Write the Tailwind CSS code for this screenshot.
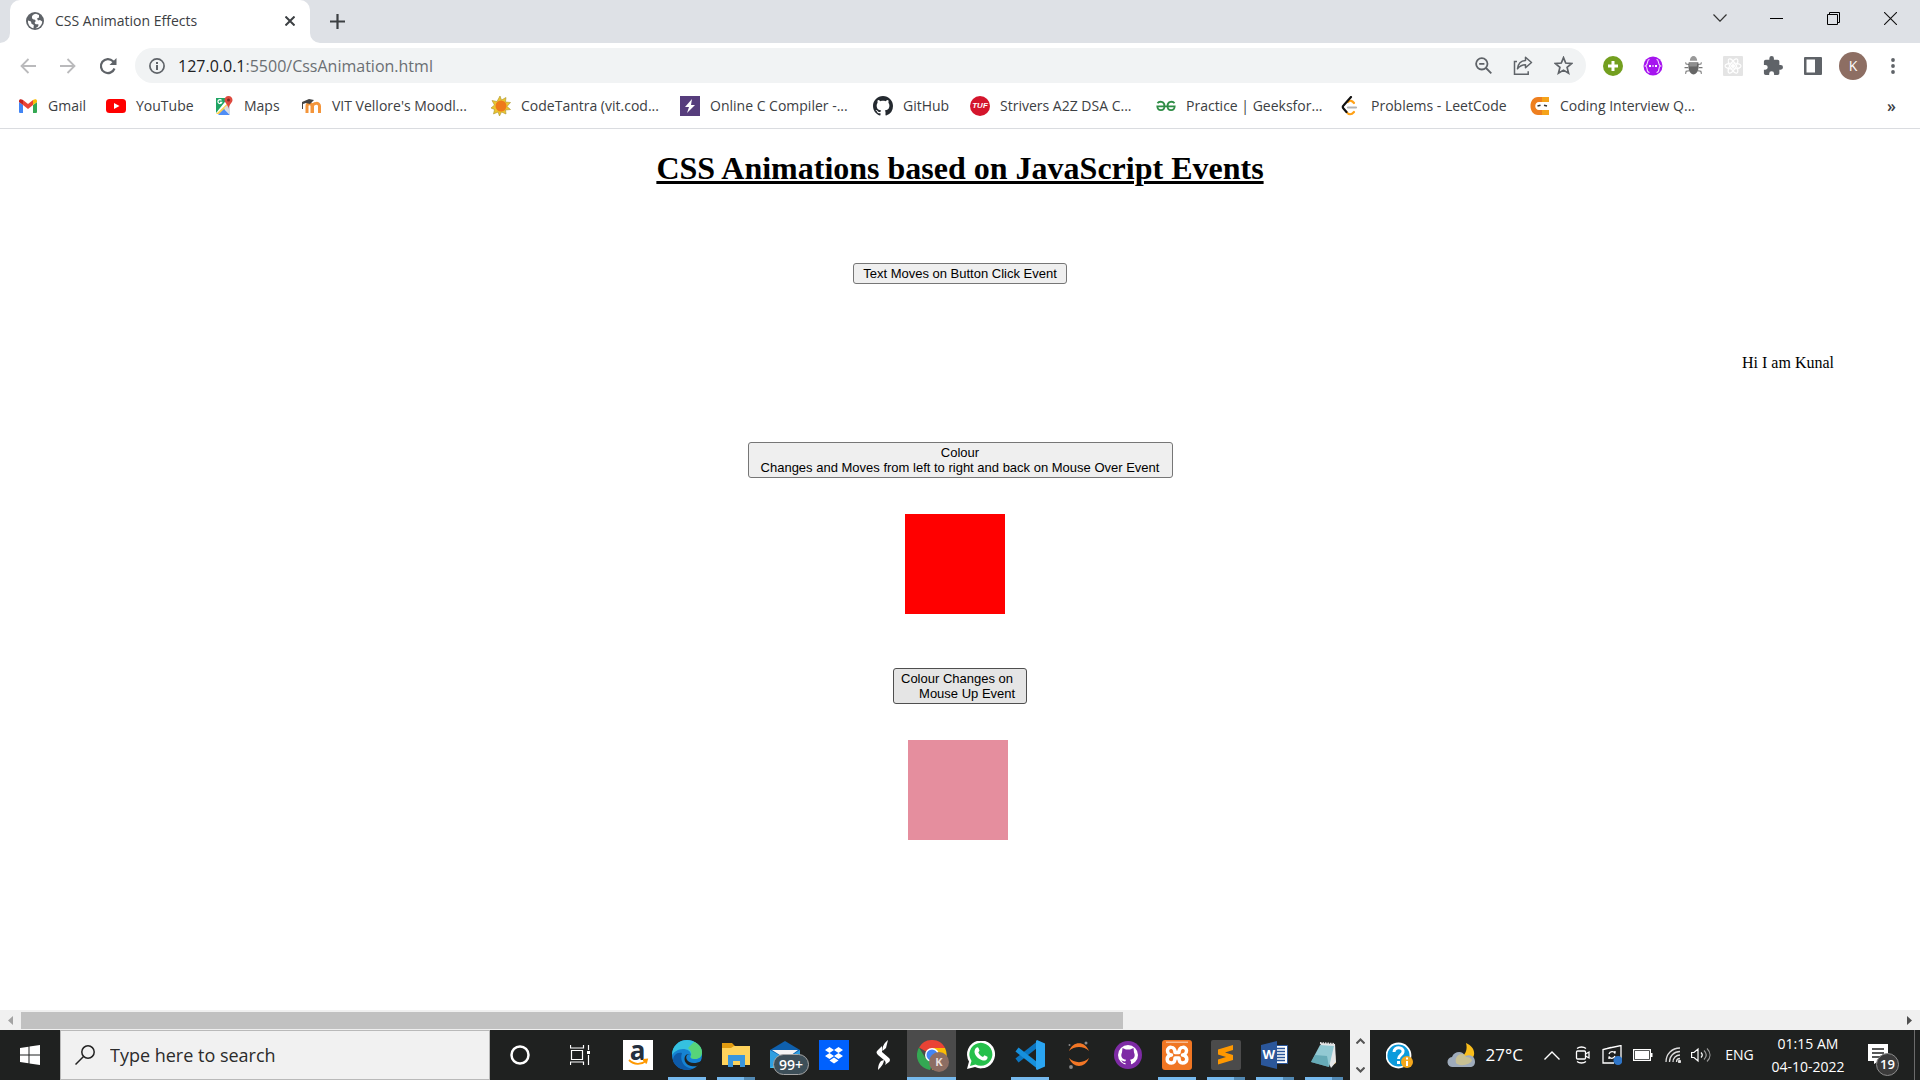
<!DOCTYPE html>
<html lang="en">
<head>
<meta charset="utf-8">
<title>CSS Animation Effects</title>
<script src="https://cdn.jsdelivr.net/npm/@tailwindcss/browser@4"></script>
</head>
<body class="flex min-h-screen flex-col overflow-x-hidden bg-white font-['Open_Sans',sans-serif] text-[#3c4043]">

<!-- Tab strip -->
<header class="flex h-[43px] shrink-0 items-end bg-[#dee1e6]">
  <svg class="size-[10px] shrink-0" viewBox="0 0 10 10"><path fill="#fff" d="M10 0v10H0A10 10 0 0 0 10 0z"/></svg>
  <div class="flex h-full w-[300px] items-center rounded-t-[10px] bg-white pr-[10px] pb-[2px] pl-4">
    <svg class="size-[18px] shrink-0" viewBox="0 0 18 18"><circle cx="9" cy="9" r="9" fill="#5f6368"/><path fill="#fff" d="M10 1.800C7 2 5.500 4 6 6c.5 2 3 1 3.500 2.500S8 10 9 11.500s3.500 0 3.500 1.500-1.500 2.500-3 3.200C13 16.500 16.200 13 16.200 9.500L14 8l-2 .5-1-2 2-1V3zM2 8.500C1.500 13 5 16 7.500 16.200L7.800 13 5.500 11.800 5 9.500z"/></svg>
    <span class="ml-[11px] flex-1 text-sm whitespace-nowrap">CSS Animation Effects</span>
    <button class="flex size-5 items-center justify-center" aria-label="Close tab"><svg class="size-[10px]" viewBox="0 0 10 10" stroke="#3c4043" stroke-width="2"><path d="M.5.5l9 9M9.500.5l-9 9"/></svg></button>
  </div>
  <svg class="size-[10px] shrink-0" viewBox="0 0 10 10"><path fill="#fff" d="M0 0v10h10A10 10 0 0 1 0 0z"/></svg>
  <button class="flex h-full w-[34px] items-center justify-center" aria-label="New tab"><svg class="size-[15px]" viewBox="0 0 15 15" stroke="#3c4043" stroke-width="2.200"><path d="M7.500 0v15M0 7.500h15"/></svg></button>
  <div class="ml-auto flex h-9 self-start pr-px">
    <button class="flex w-[57px] items-center justify-center" aria-label="Search tabs"><svg class="h-2 w-[14px]" viewBox="0 0 14 8" fill="none" stroke="#333" stroke-width="1.200"><path d="M.5.5L7 7.200 13.500.5"/></svg></button>
    <button class="flex w-[57px] items-center justify-center" aria-label="Minimize"><svg class="h-px w-[13px]" viewBox="0 0 13 1"><path fill="#000" d="M0 0h13v1H0z"/></svg></button>
    <button class="flex w-[57px] items-center justify-center" aria-label="Restore"><svg class="size-[13px]" viewBox="0 0 13 13" fill="none" stroke="#000"><path d="M.5 2.500h10v10H.5zM2.500 2.500v-2h10v10h-2"/></svg></button>
    <button class="flex w-[57px] items-center justify-center" aria-label="Close"><svg class="size-[13px]" viewBox="0 0 13 13" stroke="#111" stroke-width="1.100"><path d="M0 0l13 13M13 0L0 13"/></svg></button>
  </div>
</header>

<!-- Toolbar -->
<nav class="flex h-[45px] shrink-0 items-center pr-[7px] pl-2" aria-label="Browser toolbar">
  <button class="flex w-10 justify-center" aria-label="Back"><svg class="size-4" viewBox="0 0 16 16" fill="none" stroke="#bababc" stroke-width="1.800"><path d="M16 8H1.500M8.500 1L1.500 8l7 7"/></svg></button>
  <button class="flex w-10 justify-center" aria-label="Forward"><svg class="size-4" viewBox="0 0 16 16" fill="none" stroke="#bababc" stroke-width="1.800"><path d="M0 8h14.500M7.500 1l7 7-7 7"/></svg></button>
  <button class="flex w-10 justify-center" aria-label="Reload"><svg class="size-[18px]" viewBox="0 0 18 18" fill="none" stroke="#5f6368" stroke-width="2.200"><path d="M15.500 11.500A7 7 0 1 1 14 4.200l2 2"/><path fill="#5f6368" stroke="none" d="M17.500 1v7h-7z"/></svg></button>
  <div class="ml-[7px] flex h-[35px] flex-1 items-center rounded-full bg-[#f1f3f4] pr-[3px] pl-[14px]">
    <svg class="size-4 shrink-0" viewBox="0 0 16 16"><circle cx="8" cy="8" r="7.100" fill="none" stroke="#5f6368" stroke-width="1.700"/><path fill="#5f6368" d="M7 7h2v5H7zM7 4h2v2H7z"/></svg>
    <span class="ml-[13px] flex-1 text-base whitespace-nowrap text-[#6b6f73]"><span class="text-[#202124]">127.0.0.1</span>:5500/CssAnimation.html</span>
    <button class="flex w-10 justify-center" aria-label="Zoom"><svg class="size-[17px]" viewBox="0 0 17 17" fill="none" stroke="#5f6368" stroke-width="1.800"><circle cx="6.800" cy="6.800" r="5.700"/><path d="M11 11l5.300 5.300M4.200 6.800h5.200"/></svg></button>
    <button class="flex w-10 justify-center" aria-label="Share"><svg class="h-[19px] w-5" viewBox="0 0 20 19" fill="none" stroke="#5f6368" stroke-width="1.500"><path d="M4 5.500H1.500v12.700h13.700v-3"/><path stroke-linejoin="round" d="M12.500 1.200l6 5.300-6 5.300v-3c-4 0-6 1.500-8 4 .5-4.500 3-8 8-8.300z"/></svg></button>
    <button class="flex w-10 justify-center" aria-label="Bookmark"><svg class="size-[19px]" viewBox="0 0 18 18" fill="none" stroke="#5f6368" stroke-width="1.600"><path d="M9 1.500l2.100 5.200 5.600.5-4.300 3.600 1.400 5.500L9 13.400l-4.800 2.900 1.400-5.500-4.300-3.600 5.600-.5z"/></svg></button>
  </div>
  <div class="ml-[7px] flex items-center">
    <button class="flex w-10 justify-center" aria-label="Extension: add"><svg class="size-5" viewBox="0 0 20 20"><circle cx="10" cy="10" r="10" fill="#739f1f"/><path stroke="#fff" stroke-width="3" d="M10 5v10M5 10h10"/></svg></button>
    <button class="flex w-10 justify-center" aria-label="Extension: code"><svg class="size-5" viewBox="0 0 20 20" fill="none" stroke="#f5d5ff" stroke-width="1.100"><circle cx="10" cy="10" r="9.500" fill="#a514ef" stroke="none"/><path d="M6.500 3.500C3.500 3.500 5.500 9 2.500 10c3 1 0 6.500 4 6.500M13.500 3.500c3 0 1 5.500 4 6.500-3 1 0 6.500-4 6.500"/><path fill="#fff" stroke="none" d="M6 9h2v2H6zM9 9.500h2v1H9zM12 9h2v2h-2z"/></svg></button>
    <button class="flex w-10 justify-center" aria-label="Extension: bug"><svg class="size-[19px]" viewBox="0 0 18 18"><g fill="none" stroke="#777"><path d="M5 8L2 7.500 1.500 6M4 11H.5M5 14l-3 .5L1.500 17M13 8l3-.5.500-1.500M14 11h3.500M13 14l3 .5.500 2.500"/></g><path fill="#999" d="M5.500 4.500a3.500 4.500 0 0 1 7 0z"/><path fill="#666" d="M4.500 6h9c1 5 0 11-4.500 11.500C4.500 17 3.500 11 4.500 6z"/><path fill="#aaa" d="M5 6h8l-1 4H5z" opacity=".6"/></svg></button>
    <button class="flex w-10 justify-center" aria-label="Extension: React"><svg class="size-5" viewBox="0 0 20 20" fill="none" stroke="#fff" stroke-width="1.100"><rect width="20" height="20" rx="1" fill="#e4e4e4" stroke="none"/><ellipse cx="10" cy="10" rx="8" ry="3"/><ellipse cx="10" cy="10" rx="8" ry="3" transform="rotate(60 10 10)"/><ellipse cx="10" cy="10" rx="8" ry="3" transform="rotate(120 10 10)"/><circle cx="10" cy="10" r="1.500" fill="#fff"/></svg></button>
    <button class="flex w-10 justify-center" aria-label="Extensions"><svg class="size-5" viewBox="1 1 22 22"><path fill="#5f6368" d="M20.500 11H19V7a2 2 0 0 0-2-2h-4V3.500a2.500 2.500 0 0 0-5 0V5H4a2 2 0 0 0-2 2v3.800h1.500a2.700 2.700 0 0 1 0 5.400H2V20a2 2 0 0 0 2 2h3.800v-1.500a2.700 2.700 0 0 1 5.400 0V22H17a2 2 0 0 0 2-2v-4h1.500a2.500 2.500 0 0 0 0-5z"/></svg></button>
    <button class="flex w-10 justify-center" aria-label="Side panel"><svg class="size-[18px]" viewBox="0 0 18 18"><path fill="#5f6368" fill-rule="evenodd" d="M1 0h16a1 1 0 0 1 1 1v16a1 1 0 0 1-1 1H1a1 1 0 0 1-1-1V1a1 1 0 0 1 1-1zm1.500 2.500v13H11v-13z"/></svg></button>
    <button class="flex w-10 justify-center" aria-label="Profile"><span class="flex size-7 items-center justify-center rounded-full bg-[#8d6e63] text-sm text-white">K</span></button>
    <button class="flex w-10 justify-center" aria-label="Menu"><svg class="h-4 w-1" viewBox="0 0 4 16" fill="#5f6368"><circle cx="2" cy="2" r="1.900"/><circle cx="2" cy="8" r="1.900"/><circle cx="2" cy="14" r="1.900"/></svg></button>
  </div>
</nav>

<!-- Bookmarks bar -->
<nav class="flex h-[41px] shrink-0 items-center border-b border-[#dadce0] pr-6 pb-1 pl-[18px] text-sm whitespace-nowrap" aria-label="Bookmarks">
  <a href="#" class="flex w-[88px] items-center gap-[10px]"><svg class="size-5 shrink-0" viewBox="0 0 20 20"><path fill="#4285f4" d="M1 6l4 3v8H2a1 1 0 0 1-1-1z"/><path fill="#34a853" d="M15 9l4-3v10a1 1 0 0 1-1 1h-3z"/><path fill="#ea4335" d="M5 4l5 4 5-4v5l-5 4-5-4z"/><path fill="#c5221f" d="M1 5c0-2 2-2.500 4-1v5L1 6z"/><path fill="#fbbc04" d="M19 5c0-2-2-2.500-4-1v5l4-3z"/></svg>Gmail</a>
  <a href="#" class="flex w-[108px] items-center gap-[10px]"><svg class="size-5 shrink-0" viewBox="0 0 20 20"><rect y="3" width="20" height="14" rx="3.500" fill="#f00"/><path fill="#fff" d="M8 7l5.500 3L8 13z"/></svg>YouTube</a>
  <a href="#" class="flex w-[88px] items-center gap-[10px]"><svg class="size-5 shrink-0" viewBox="0 0 20 20"><path fill="#1fa463" d="M2 2h12L2 17z"/><path fill="#ffd04b" d="M2 18L16 5v4L6 18z"/><path fill="#4f8df5" d="M4 19l6-6 6 6z"/><path fill="#d9dbe0" d="M10 12l6-5v12z"/><path fill="#de4a3f" d="M14.500 0C12 0 10.500 2 10.500 4c0 3 3.500 4 4 9 .5-5 4-6 4-9 0-2-1.500-4-4-4z"/><circle cx="14.500" cy="4" r="1.500" fill="#7d2820"/><path fill="none" stroke="#fff" stroke-width="1.200" d="M7.500 4.300a2 2 0 1 0 .3 2H6"/></svg>Maps</a>
  <a href="#" class="flex w-[189px] items-center gap-[10px]"><svg class="size-5 shrink-0" viewBox="0 0 20 20"><path fill="none" stroke="#f4953a" stroke-width="3" d="M5 17V10c0-3 5-3 5 0v7M10.500 17v-7c.5-3 7-4 7 0v7"/><path fill="#444" d="M0 6l7-3 5 1-4 4-4-1-3 1v5H0z"/></svg>VIT Vellore's Moodl...</a>
  <a href="#" class="flex w-[189px] items-center gap-[10px]"><svg class="size-5 shrink-0" viewBox="0 0 20 20"><path fill="#ecc52f" stroke="#a9932f" stroke-width=".6" d="M9 0l1.500 4L15 1.500 14.500 6l5 .5-3.500 4 3.500 3-5 .5.500 4-4.500-2L8.500 20l-1.500-4-4.500 2 1-4.500L0 12l3.500-3L1 4.500l5 1z"/><circle cx="10" cy="10" r="5.500" fill="#ee7a1b"/></svg>CodeTantra (vit.cod...</a>
  <a href="#" class="flex w-[193px] items-center gap-[10px]"><svg class="size-5 shrink-0" viewBox="0 0 20 20"><path fill="#563d7c" d="M0 0h20v20H0z"/><path fill="#fff" d="M12 3l-7 8h4l-2 6 8-8h-4z"/></svg>Online C Compiler -...</a>
  <a href="#" class="flex w-[97px] items-center gap-[10px]"><svg class="size-5 shrink-0" viewBox="0 0 16 16"><path fill="#24292f" d="M8 0C3.580 0 0 3.580 0 8c0 3.540 2.290 6.530 5.470 7.590.4.070.55-.17.55-.38 0-.19-.01-.82-.01-1.490-2.010.37-2.530-.49-2.690-.94-.09-.23-.48-.94-.82-1.130-.28-.15-.68-.52-.01-.53.63-.01 1.080.58 1.230.82.72 1.210 1.870.87 2.330.66.07-.52.28-.87.51-1.070-1.780-.2-3.640-.89-3.640-3.950 0-.87.31-1.590.82-2.150-.08-.2-.36-1.020.08-2.120 0 0 .67-.21 2.200.82.64-.18 1.320-.27 2-.27s1.360.09 2 .27c1.530-1.040 2.200-.82 2.200-.82.44 1.100.16 1.920.08 2.120.51.56.82 1.270.82 2.150 0 3.070-1.870 3.750-3.650 3.950.29.25.54.73.54 1.480 0 1.070-.01 1.930-.01 2.200 0 .21.15.46.55.38A8.010 8.010 0 0 0 16 8c0-4.420-3.580-8-8-8z"/></svg>GitHub</a>
  <a href="#" class="flex w-[186px] items-center gap-[10px]"><span class="flex size-5 shrink-0 items-center justify-center rounded-full bg-[#d4152c] font-['Liberation_Sans',sans-serif] text-[8px] font-bold text-white italic">TUF</span>Strivers A2Z DSA C...</a>
  <a href="#" class="flex w-[185px] items-center gap-[10px]"><svg class="size-5 shrink-0" viewBox="0 0 20 20" fill="none" stroke="#2f8d46" stroke-width="1.800"><path d="M1.500 7.200C3 5 8.500 5 8.500 10c0 5.500-7 5.500-7.200.3h17.400c-.2 5.200-7.200 5.200-7.200-.3 0-5 5.500-5 7-2.800"/></svg>Practice | Geeksfor...</a>
  <a href="#" class="flex w-[189px] items-center gap-[10px]"><svg class="size-5 shrink-0" viewBox="0 0 20 20" fill="none" stroke-width="2.200" stroke-linecap="round"><path stroke="#ffa116" d="M5.500 16c2 3 5 3 7.500 0M7 6c2-2 4-1.500 6 1"/><path stroke="#111" d="M10 1L2.500 9.500c-1 1-1 2 0 3L5.500 16"/><path stroke="#b3b3b3" d="M7 11.500h8"/></svg>Problems - LeetCode</a>
  <a href="#" class="flex items-center gap-[10px]"><svg class="size-5 shrink-0" viewBox="0 0 20 20"><path fill="#ee7f1f" d="M8 1h11v5H9c-5 0-5 8 0 8h10v5H8C-2 19-2 1 8 1z"/><path fill="#f5a31a" d="M12 1h7v5h-7zM12 14h7v5h-7z"/><path stroke="#333" stroke-width="1.500" d="M7.500 10l3-.8M14 9.200l3 .8"/></svg>Coding Interview Q...</a>
  <button class="ml-auto text-base font-semibold" aria-label="More bookmarks">»</button>
</nav>

<!-- Page -->
<main class="flex flex-1 flex-col items-center px-2 font-['Liberation_Sans',sans-serif] text-[13px] leading-[15px] text-black">
  <h1 class="mt-[21px] font-['Liberation_Serif',serif] text-[32px] leading-[37px] font-bold underline">CSS Animations based on JavaScript Events</h1>
  <button class="mt-[76px] w-[214px] rounded-[3px] border border-[#767676] bg-[#efefef] py-[2px]">Text Moves on Button Click Event</button>
  <p class="mt-[70px] mr-[78px] self-end font-['Liberation_Serif',serif] text-base leading-[18px]">Hi I am Kunal</p>
  <button class="mt-[70px] w-[425px] rounded-[3px] border border-[#767676] bg-[#efefef] py-[2px]">Colour<br>Changes and Moves from left to right and back on Mouse Over Event</button>
  <div class="mt-9 mr-[10px] size-[100px] bg-[#ff0000]"></div>
  <button class="mt-[54px] w-[134px] rounded-[3px] border border-[#4f4f4f] bg-[#e5e5e5] py-[2px] pl-[7px] text-left whitespace-pre">Colour Changes on
     Mouse Up Event</button>
  <div class="mt-9 mr-1 size-[100px] bg-[#e58e9e]"></div>
</main>

<!-- Horizontal scrollbar -->
<div class="flex h-5 shrink-0 items-center bg-[#f0f0f0] px-2">
  <svg class="h-[9px] w-[5px]" viewBox="0 0 5 9"><path fill="#a3a3a3" d="M5 0v9L0 4.500z"/></svg>
  <div class="mx-2 flex-1"><div class="h-[17px] w-[58.7%] bg-[#c1c1c1]"></div></div>
  <svg class="h-[9px] w-[5px]" viewBox="0 0 5 9"><path fill="#505050" d="M0 0v9l5-4.500z"/></svg>
</div>

<!-- Taskbar -->
<footer class="flex h-[50px] shrink-0 items-stretch bg-[#1f2120] whitespace-nowrap text-white">
  <button class="flex w-[60px] items-center justify-center" aria-label="Start"><svg class="size-5" viewBox="0 0 20 20" fill="#fff"><path d="M0 3l8.500-1.200v7.700H0zM9.500 1.600L20 0v9.500H9.500zM0 10.500h8.500v7.700L0 17zM9.500 10.500H20V20L9.500 18.400z"/></svg></button>
  <label class="flex w-[430px] items-center border border-[#b9b9b9] bg-[#f1f1f1] pl-[14px]">
    <svg class="size-5 shrink-0" viewBox="0 0 20 20" fill="none" stroke="#222" stroke-width="1.500"><circle cx="13" cy="7" r="6.200"/><path d="M8.500 11.500L.5 19.500"/></svg>
    <input type="text" aria-label="Search" placeholder="Type here to search" class="ml-[15px] min-w-0 flex-1 text-lg outline-none placeholder:text-[#2b2b2b]">
  </label>
  <button class="flex w-[60px] items-center justify-center" aria-label="Cortana"><svg class="size-5" viewBox="0 0 20 20"><circle cx="10" cy="10" r="8.500" fill="none" stroke="#fff" stroke-width="2.500"/></svg></button>
  <button class="flex w-[60px] items-center justify-center" aria-label="Task view"><svg class="size-5" viewBox="0 0 20 20" fill="none" stroke="#fff" stroke-width="1.200"><path d="M1.500 5.500h11v9h-11zM.5 0v3h13V0M.5 20v-3h13v3M18.500 0v5M18.500 10v10"/><path fill="#fff" stroke="none" d="M17 6h3v3h-3z"/></svg></button>

  <div class="flex pl-[3px]">
    <button class="flex w-[49px] items-center justify-center" aria-label="Amazon"><span class="relative flex size-[30px] justify-center bg-white"><span class="text-[26px] leading-[20px] font-bold text-[#232f3e]">a</span><svg class="absolute inset-0" viewBox="0 0 30 30" fill="none" stroke="#ff9900" stroke-width="1.800"><path d="M6 20c5 5 12 5 17 1M20 20l4-.5-1 4"/></svg></span></button>
    <button class="relative flex w-[49px] items-center justify-center" aria-label="Edge"><svg class="size-[30px]" viewBox="0 0 30 30"><circle cx="15" cy="15" r="15" fill="#1583d3"/><path fill="#35c1e0" d="M0 15C0 6 7 0 15 0s15 6 15 12c0 5-3 7-7 7-3 0-6-1-4-4 0-4-4-6-8-6-5 0-9 3-11 6z"/><path fill="#63d957" d="M22 2c5 2 8 6 8 10 0 5-3 7-7 7-3 0-5-1-4-3 1-3 0-6-3-8z" opacity=".75"/><path fill="#0d5aa8" d="M10 13c-3 8 3 16 11 15.500C14 32 4 29 1 21c0-6 4-9 9-8z"/><path fill="#1f2120" d="M19 14c-4-2-6 1-5 5 2 5 9 6 15 2l1 0v9h-8c-5 0-9-3-9.500-8C12 15 15 12 19 14z" opacity="0"/><path fill="#1f2120" d="M18.500 15c-3-1.500-5 1-4 4 2 4.500 9 5.500 14.500 2l1 1-1 1.500-.7.300C26 27 22 26.500 19 26c-4-1-6.500-4-6.500-7 0-4 3-6 6-4z"/></svg><span class="absolute bottom-0 h-[3px] w-[38px] bg-[#76b9ed]"></span></button>
    <button class="relative flex w-[49px] items-center justify-center" aria-label="File Explorer"><svg class="h-6 w-7" viewBox="0 0 28 24"><path fill="#e19b10" d="M0 0h10l3 3h-1v4H0z"/><path fill="#ffd35c" d="M0 5h9l3-2h16v19H0z"/><path fill="#3a96dd" d="M6 12h17v12h-5v-6h-7v6H6z"/></svg><span class="absolute bottom-0 h-[3px] w-[38px] border-r-[11px] border-[#5289b3] bg-[#76b9ed]"></span></button>
    <button class="relative flex w-[49px] items-center justify-center" aria-label="Mail"><svg class="h-[30px] w-[30px]" viewBox="0 0 30 30"><path fill="#0f60ad" d="M0 10L15 1l15 9v6H0z"/><path fill="#f4f4f4" d="M2 10h26l-12 9z"/><path fill="#2f9fe0" d="M0 10l16 9L30 10v18H0z"/><path fill="#41c3ef" d="M0 28l16-10 14 10z"/></svg><span class="absolute top-6 left-[13px] flex h-[21px] w-[36px] items-center justify-center rounded-full border border-[#a5a5a5] bg-[#3d4f59] text-sm font-semibold">99+</span></button>
    <button class="flex w-[49px] items-center justify-center" aria-label="Dropbox"><svg class="size-[30px]" viewBox="0 0 30 30"><path fill="#0061fe" d="M0 0h30v30H0z"/><path fill="#fff" d="M10.500 7L15 10l-4.500 3L6 10zM19.500 7L24 10l-4.500 3L15 10zM10.500 13L15 16l-4.500 3L6 16zM19.500 13L24 16l-4.500 3L15 16zM15 17.500l4.500 3L15 23.500l-4.500-3z"/></svg></button>
    <button class="flex w-[49px] items-center justify-center" aria-label="Sports app"><svg class="size-[30px]" viewBox="0 0 30 30" fill="#fff"><path d="M20 0l-2 8-3.500 3C14 7 16 3 20 0zM14 6v6l7 6c1.500 1.500 1 3 0 4l-4 3c1-2 1-3-1-5l-6-5c-2-2-2-3.500 0-5zM16 20c0 3-2 6-6 10 0-4 1-7 3-9z"/></svg></button>
    <button class="relative flex w-[49px] items-center justify-center bg-[#4b4b4b]" aria-label="Chrome"><svg class="size-[30px]" viewBox="0 0 30 30"><path fill="#ea4335" d="M15 15L2 7.500a15 15 0 0 1 26 0z"/><path fill="#fbbc04" d="M15 8h13a15 15 0 0 1-13 22l6-11z"/><path fill="#34a853" d="M2 7.500L9 19l8 2-4 9A15 15 0 0 1 2 7.500z"/><circle cx="15" cy="15" r="7" fill="#fff"/><circle cx="15" cy="15" r="5.500" fill="#4285f4"/></svg><span class="absolute top-[22px] left-[22px] flex size-5 items-center justify-center rounded-full bg-[#8d6e63] text-[11px] font-bold text-[#eadfda]">K</span><span class="absolute bottom-0 h-[3px] w-full bg-[#76b9ed]"></span></button>
    <button class="flex w-[49px] items-center justify-center" aria-label="WhatsApp"><svg class="size-7" viewBox="0 0 28 28"><path fill="#fff" d="M0 28l2-7.500A14 14 0 1 1 8 26z"/><path fill="#25c04b" d="M3 25l1.500-5A11.500 11.500 0 1 1 8.500 23.500z"/><path fill="#fff" d="M9 7c1-1 2-1 2.500 0l1 2.500-1.200 2c1 2 2.500 3.500 4.700 4.500l1.500-1.800 3 1.500c.5 3-2.500 4.300-4.500 3.800-4-1-8-4.500-8.500-8.500 0-1.500.5-3 1.500-4z"/></svg></button>
    <button class="relative flex w-[49px] items-center justify-center" aria-label="Visual Studio Code"><svg class="size-[30px]" viewBox="0 0 30 30"><path fill="none" stroke="#0b75c0" stroke-width="5" d="M2 20.500L23 4"/><path fill="none" stroke="#1690dd" stroke-width="5" d="M2 9.500L23 26"/><path fill="#2aa5f2" d="M22 0l8 3.500v23L22 30l-1-1V1z"/></svg><span class="absolute bottom-0 h-[3px] w-[38px] bg-[#76b9ed]"></span></button>
    <button class="flex w-[49px] items-center justify-center" aria-label="Jupyter"><svg class="h-7 w-[22px]" viewBox="0 0 22 28"><path fill="#f37726" d="M1 10C5-.5 17-.5 21 10 16 4.500 6 4.500 1 10zM1 17c4 10.500 16 10.500 20 0-5 5.500-15 5.500-20 0z"/><g fill="#8a8a8a"><circle cx="18" cy="2" r="1.500"/><circle cx="1.500" cy="4" r="1"/><circle cx="3" cy="26" r="1.900"/></g></svg></button>
    <button class="flex w-[49px] items-center justify-center" aria-label="GitHub Desktop"><svg class="size-7" viewBox="0 0 28 28"><circle cx="14" cy="14" r="14" fill="#7e2ba5"/><circle cx="14" cy="14" r="10" fill="#fff"/><path fill="#7e2ba5" d="M8.500 7l3.500 1.500h4L19.500 7l.5 4.500c2 4-.5 7-4 7.200l1 1.800V24h-5.500v-2c-3 .5-3-2-4.500-2.500 2-.5 2.500 1.500 4.500.8l.5-1.600c-3.500-.2-6-3.200-4-7.200z"/></svg></button>
    <button class="relative flex w-[49px] items-center justify-center" aria-label="XAMPP"><svg class="size-[30px]" viewBox="0 0 30 30"><rect width="30" height="30" rx="3" fill="#f07623"/><path fill="#f7b98e" d="M4 1.500h22v1.500H4z"/><path fill="none" stroke="#fff" stroke-width="3.500" stroke-linejoin="round" d="M13 12.500h4c0-7 7.500-6 7.500-2 0 3-2 4.500-4 4.500 6 1 5.500 8 0 8-3 0-3.500-2-3.500-5h-4c0 3-.5 5-3.500 5-5.500 0-6-7 0-8-2 0-4-1.500-4-4.500 0-4 7.500-5 7.500 2z"/></svg><span class="absolute bottom-0 h-[3px] w-[38px] bg-[#76b9ed]"></span></button>
    <button class="relative flex w-[49px] items-center justify-center" aria-label="Sublime Text"><svg class="size-[30px]" viewBox="0 0 30 30"><rect width="30" height="30" rx="2" fill="#4b4b4b"/><path fill="#ff9800" d="M22 5v5l-8 2.500 8 2.500v5L7 24.500v-5l8-2.500-8-2.500v-5z"/></svg><span class="absolute bottom-0 h-[3px] w-[38px] border-r-[11px] border-[#5289b3] bg-[#76b9ed]"></span></button>
    <button class="relative flex w-[49px] items-center justify-center" aria-label="Word"><span class="relative flex h-7 w-7 items-center"><svg class="absolute inset-0" viewBox="0 0 28 28"><path fill="#fff" stroke="#2b579a" d="M14 4.500h12.500v18H14z"/><path stroke="#2b579a" stroke-width="1.500" d="M16 7.500h8M16 10.500h8M16 13.500h8M16 16.500h8M16 19.500h8"/><path fill="#2b579a" d="M0 4l16-4v28L0 24z"/></svg><span class="relative pl-[2px] text-[13px] font-bold">W</span></span><span class="absolute bottom-0 h-[3px] w-[38px] border-r-[11px] border-[#5289b3] bg-[#76b9ed]"></span></button>
    <button class="relative flex w-[49px] items-center justify-center" aria-label="Notepad"><svg class="h-7 w-7" viewBox="0 0 28 28"><path fill="#d9a441" d="M24 4l2 18-3 2z"/><path fill="#e5e7e8" d="M10 2l15 1 1 18-5 6z"/><path fill="#92c9d3" d="M10 4l14 1-5 21L1 21z"/><path fill="#4b98a5" d="M5 14l12 1 2 11L1 21z" opacity=".6"/><path stroke="#ddd" stroke-width="2" stroke-dasharray="1.500 1" d="M10 2l15 1"/></svg><span class="absolute bottom-0 h-[3px] w-[38px] border-r-[11px] border-[#5289b3] bg-[#76b9ed]"></span></button>
  </div>

  <div class="ml-[2px] flex w-5 flex-col items-center justify-between bg-[#f0f0f0] pt-2 pb-[7px]">
    <svg class="h-[6px] w-[9px]" viewBox="0 0 9 6" fill="none" stroke="#555" stroke-width="2"><path d="M.5 5.500l4-4 4 4"/></svg>
    <svg class="h-[6px] w-[9px]" viewBox="0 0 9 6" fill="none" stroke="#555" stroke-width="2"><path d="M.5.5l4 4 4-4"/></svg>
  </div>

  <div class="ml-auto flex items-center">
    <button class="flex w-[53px] justify-center" aria-label="Help"><svg class="size-[27px]" viewBox="0 0 27 27"><circle cx="12.500" cy="13.500" r="12" fill="#0c9bdc" stroke="#fff" stroke-width="1.800"/><path fill="none" stroke="#fff" stroke-width="3" d="M8 10c0-6 10-5.500 9 0-.5 3-4.500 3-4.500 7M12.500 19v3"/><circle cx="21" cy="20" r="6" fill="#f5a81c"/><path stroke="#fff" stroke-width="2" d="M21 19v5M21 15.500v2"/></svg></button>
    <button class="ml-[21px] flex items-center text-[17px]" aria-label="Weather"><svg class="mr-[11px] h-[25px] w-[28px]" viewBox="0 0 28 25"><path fill="#f9bd1b" d="M19 0c10 4 11 15 2 18-5 1-9-1-10-4 7 0 10-7 8-14z"/><path fill="#9eabbb" d="M6 24a5 5 0 0 1-1-10C7 8 16 7 18 13c6-2 10 1 10 6 0 3-2 5-5 5z"/><path fill="#d8c982" d="M9 20c-2-8 7-12 10-6 3 0 5 1 6 3-1 5-13 7-16 3z" opacity=".7"/></svg>27°C</button>
    <button class="ml-[21px] flex w-4 justify-center" aria-label="Hidden icons"><svg class="h-[9px] w-4" viewBox="0 0 16 9" fill="none" stroke="#fff" stroke-width="1.400"><path d="M.5 8.500L8 1l7.500 7.500"/></svg></button>
    <button class="ml-[15px] flex w-4" aria-label="Meet now"><svg class="h-[18px] w-4" viewBox="0 0 16 18" fill="none" stroke="#fff" stroke-width="1.300"><rect x="1.500" y="5" width="9" height="8" rx="1"/><path d="M10.500 8l3.500-2v6l-3.500-2M2 2.500c2.500-2 6.500-2 9 0M2 15.500c2.500 2 6.500 2 9 0"/></svg></button>
    <button class="ml-[11px] flex w-5" aria-label="Update"><svg class="size-5" viewBox="0 0 20 20" fill="none" stroke="#fff" stroke-width="1.300"><path d="M5 3.500l14-3v14M9 2.500l-8 2V18h11"/><path d="M7 9c1-3 5-3 6-.5V6M13 11c-1 3-5 3-6 .5V14"/><circle cx="16" cy="15.500" r="4.500" fill="#2f76c9" stroke="none"/></svg></button>
    <button class="ml-[11px] flex w-5" aria-label="Battery"><svg class="h-3 w-5" viewBox="0 0 20 12"><path fill="none" stroke="#fff" stroke-width="1.200" d="M.6.6h16.800v10.800H.6z"/><path fill="#fff" d="M2 2h14v8H2zM18 4h1.500v4H18z"/></svg></button>
    <button class="ml-3 flex w-4" aria-label="Network"><svg class="size-4" viewBox="0 0 16 16" fill="none" stroke="#ddd" stroke-width="1.300"><path d="M1 15C1 7 7 1 15 1M4.500 15C4.500 9 9 4.500 15 4.500M8 15c0-4 3-7 7-7M11.500 15c0-2 1.500-3.500 3.500-3.500"/><circle cx="14.500" cy="14.500" r="1" fill="#fff"/></svg></button>
    <button class="ml-[10px] flex w-5" aria-label="Volume"><svg class="h-4 w-5" viewBox="0 0 20 16" fill="none" stroke="#fff" stroke-width="1.200"><path d="M.6 5.500H3L7 2v12l-4-3.500H.6zM10 5.500c1.500 1.500 1.500 3.500 0 5"/><path stroke="#999" d="M13 3.500c3 3 3 6 0 9M16 1.500c4 4 4 9 0 13"/></svg></button>
    <button class="ml-[13px] w-[31px] text-sm" aria-label="Language">ENG</button>
    <div class="ml-[13px] w-[80px] text-center text-sm leading-[23px]">01:15 AM<br>04-10-2022</div>
    <button class="relative ml-5 flex h-[34px] w-[34px]" aria-label="Notifications"><svg class="mt-[6px] size-5" viewBox="0 0 20 20"><path fill="#fff" d="M0 0h20v17h-9l-5 3v-3H0z"/><path stroke="#1f2120" stroke-width="1.500" d="M4 5h12M4 9h12M4 13h8"/></svg><span class="absolute top-[15px] left-2 flex size-[23px] items-center justify-center rounded-full border border-[#8b8b8b] bg-[#3b3b3b] text-[13px] font-semibold">19</span></button>
    <div class="mr-[5px] ml-3 h-[50px] w-px bg-[#6b6b6b]"></div>
  </div>
</footer>
</body>
</html>
